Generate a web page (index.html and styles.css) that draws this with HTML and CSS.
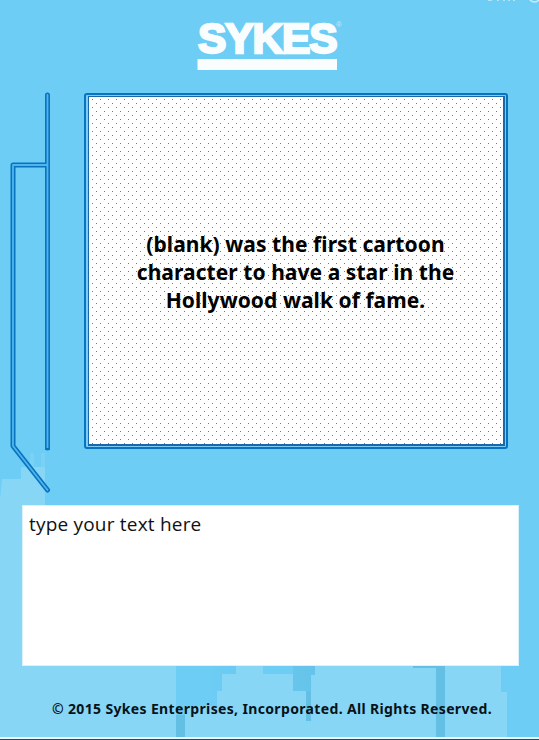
FILE: index.html
```html
<!DOCTYPE html>
<html lang="en">
<head>
<meta charset="utf-8">
<title>Sykes</title>
<link rel="stylesheet" href="styles.css">
</head>
<body>
<div class="page">
  <svg class="backdrop" viewBox="0 0 539 740" aria-hidden="true">
    <defs>
      <linearGradient id="shade"><stop offset="0" stop-color="#6dcdf5"/><stop offset="1" stop-color="#66c3ea"/></linearGradient>
    </defs>
    <path class="haze" d="M30 453h4v34h7v-34h4v52H0v-6l2-12h19v-20h9z"/>
    <path class="building" d="M0 515v-16l2-20h19v-12h24v48H24v150h152v72H0z"/>
    <path fill="url(#shade)" d="M207 665h29v9h-14v17h-5v15h-10zM293 665h22v10h-3v46h-7v-30h-12z"/>
    <path class="building" d="M185 737v-31h32v-15h5v-17h14v-9h27v9h30v17h13v30h5v-46h4v-10h98v3h24v69z"/>
    <path class="building" d="M445 665h56v27h6v45h-62z"/>
    <path class="shadow" d="M413 665h32v72h-9v-69h-23zM176 715h9v22h-9zM306 691h5v30h-5z"/>
    <path class="frame-outer" d="M47.500 95v353M47.500 165H13v281l34.500 44"/>
    <path class="frame-inner" d="M47.500 95v353M47.500 165H13v281l34.500 44"/>
    <path class="cap" d="M45 449h5"/>
    <g class="clipped"><path d="M488 0h4M497 0h2M503 0h2M508 0h2M513 0h2"/><circle cx="534.500" cy="-3.500" r="5.500"/></g>
  </svg>
  <header class="header">
    <svg class="logo" width="148" height="60" viewBox="0 0 148 60" role="img" aria-label="Sykes">
      <text class="logo-word" x="1" y="37.500" textLength="139.500" lengthAdjust="spacing">SYKES</text>
      <text class="logo-mark" x="139" y="12">®</text>
      <path fill="#fafdfe" d="M.5 44H140v11H.5z"/>
    </svg>
  </header>
  <main class="content">
    <section class="card">
      <p class="question">(blank) was the first cartoon<br>character to have a star in the<br>Hollywood walk of fame.</p>
    </section>
    <div class="answer">type your text here</div>
  </main>
  <footer class="footer">© 2015 Sykes Enterprises, Incorporated. All Rights Reserved.</footer>
</div>
</body>
</html>
```
FILE: styles.css
```css
* { box-sizing: border-box; }
body { margin: 0; }
.page {
  position: relative;
  display: flex;
  flex-direction: column;
  width: 539px;
  height: 740px;
  overflow: hidden;
  background: #6dcdf5;
  border-bottom: 1px solid #174e79;
  font-family: "Noto Sans", sans-serif;
}
.page::after {
  content: "";
  height: 2px;
  margin-top: auto;
  background: #e9f8fd;
}
.backdrop { position: absolute; top: 0; left: 0; width: 539px; height: 740px; }
.building { fill: #88d6f5; }
.haze { fill: #7bd1f5; }
.shadow { fill: #64bfe5; }
.frame-outer, .frame-inner {
  fill: none;
  stroke: #0874c0;
  stroke-width: 5;
  stroke-linecap: round;
  stroke-linejoin: round;
}
.frame-inner { stroke: #50b5ec; stroke-width: 1.800; }
.cap { stroke: #0874c0; stroke-width: 2; }
.clipped { fill: none; stroke: #c9edfb; stroke-width: 1.500; }
.header, .content, .footer { position: relative; }
.header { height: 93px; padding: 15px 0 0 197px; }
.logo { display: block; overflow: visible; }
.logo-word {
  font: bold 42.500px "Liberation Sans", sans-serif;
  fill: #fafdfe;
  stroke: #fafdfe;
  stroke-width: 2.400;
}
.logo-mark { font: 8px "Liberation Sans", sans-serif; fill: #c5ebfa; }
.content { display: flex; flex-direction: column; gap: 56px; }
.card {
  width: 424px;
  height: 356px;
  margin-left: 84px;
  padding: 1px 1px 1px 2px;
  border: 2px solid #0874c0;
  border-radius: 3px;
  background: #7dccf3;
}
.question {
  height: 350px;
  margin: 0;
  padding: 133px 1px 0 0;
  border: solid #1769a9;
  border-width: 1px 2px 2px 1px;
  background:
    conic-gradient(from 90deg at 7px 7px, #607f8c 90deg, transparent 0) 4px 3px / 8px 8px,
    conic-gradient(from 90deg at 7px 7px, #607f8c 90deg, transparent 0) 0 7px / 8px 8px,
    #fff;
  text-align: center;
  font-size: 21px;
  font-weight: 700;
  line-height: 28px;
  letter-spacing: 0.060px;
  color: #000;
}
.answer {
  width: 497px;
  height: 161px;
  margin-left: 22px;
  padding: 4px 6px;
  border: 1px solid #d9f2fc;
  background: #fff;
  font-family: "Open Sans", sans-serif;
  font-size: 19px;
  line-height: 28px;
  letter-spacing: 0.200px;
  color: #111;
}
.footer {
  margin-top: 33px;
  padding-left: 52px;
  font-size: 14px;
  font-weight: 700;
  line-height: 20px;
  letter-spacing: 0.350px;
  color: #07131a;
  white-space: nowrap;
}
```
